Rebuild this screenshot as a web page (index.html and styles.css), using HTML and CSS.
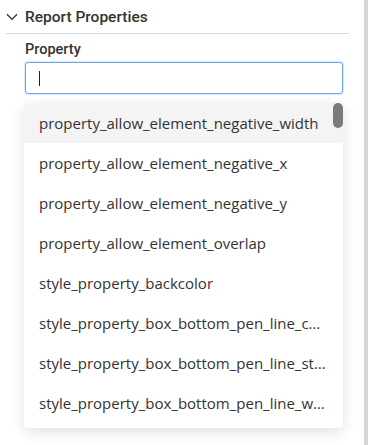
FILE: index.html
```html
<!DOCTYPE html>
<html>
<head>
<meta charset="utf-8">
<link rel="stylesheet" href="styles.css">
</head>
<body>
<div class="page">
  <div class="content">
    <div class="section-header">
      <svg class="chevron" width="12" height="8" viewBox="0 0 12 8"><path d="M1 1.2 L6 6.4 L11 1.2" fill="none" stroke="#333" stroke-width="1.3"/></svg>
      <span class="section-title">Report Properties</span>
    </div>
    <div class="divider"></div>
    <div class="field">
      <div class="label">Property</div>
      <div class="input"><span class="caret"></span></div>
      <div class="dropdown">
        <div class="list">
          <div class="item active">property_allow_element_negative_width</div>
          <div class="item">property_allow_element_negative_x</div>
          <div class="item">property_allow_element_negative_y</div>
          <div class="item">property_allow_element_overlap</div>
          <div class="item">style_property_backcolor</div>
          <div class="item">style_property_box_bottom_pen_line_color</div>
          <div class="item">style_property_box_bottom_pen_line_style</div>
          <div class="item">style_property_box_bottom_pen_line_width</div>
        </div>
        <div class="thumb"></div>
      </div>
    </div>
  </div>
  <div class="outer-scroll"></div>
</div>
</body>
</html>
```
FILE: styles.css
```css
html, body {
  margin: 0;
  padding: 0;
  background: #ffffff;
}
.page {
  display: flex;
  width: 368px;
  height: 445px;
  overflow: hidden;
}
.content {
  flex: 1;
  position: relative;
}
.outer-scroll {
  width: 4px;
  background: #d6d6d6;
}
.section-header {
  display: flex;
  align-items: center;
  height: 33px;
  padding-left: 6px;
  gap: 7px;
}
.chevron {
  display: block;
  margin-top: 1px;
}
.section-title {
  font-family: Roboto, "Liberation Sans", sans-serif;
  font-weight: 500;
  font-size: 15.5px;
  color: #333333;
}
.divider {
  height: 1px;
  background: #d8d8d8;
  margin-left: 6px;
  margin-right: 15px;
}
.field {
  position: relative;
  padding: 7px 21px 0 25px;
}
.label {
  font-family: Roboto, "Liberation Sans", sans-serif;
  font-weight: 500;
  font-size: 14.5px;
  color: #333333;
  height: 18px;
  line-height: 18px;
}
.input {
  margin-top: 3px;
  height: 30px;
  border: 1px solid #6aa7ec;
  border-radius: 3px;
  box-shadow: 0 0 0 1px rgba(106, 167, 236, 0.25);
  display: flex;
  align-items: center;
  padding-left: 13px;
}
.caret {
  width: 1px;
  height: 15px;
  background: #222;
}
.dropdown {
  position: absolute;
  left: 24px;
  top: 69px;
  width: 319px;
  padding-bottom: 5px;
  background: #ffffff;
  border-radius: 3px;
  box-shadow: 0 4px 14px rgba(0, 0, 0, 0.12);
  overflow: hidden;
}
.list {
  display: flex;
  flex-direction: column;
}
.item {
  height: 40px;
  line-height: 40px;
  padding-left: 15px;
  padding-right: 16px;
  font-family: "Open Sans", sans-serif;
  font-size: 15px;
  color: #333333;
  white-space: nowrap;
  overflow: hidden;
  text-overflow: ellipsis;
}
.item.active {
  background: #f4f4f4;
}
.thumb {
  position: absolute;
  right: 0;
  top: 0;
  width: 10px;
  height: 25px;
  border-radius: 5px;
  background: #7b7b7b;
}
```
